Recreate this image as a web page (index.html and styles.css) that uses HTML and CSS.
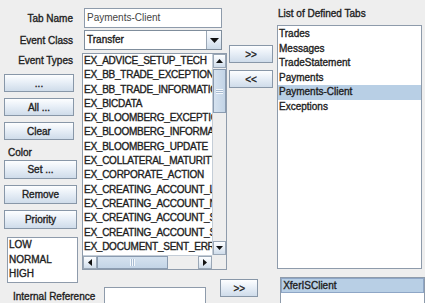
FILE: index.html
```html
<!DOCTYPE html>
<html>
<head>
<meta charset="utf-8">
<link rel="stylesheet" href="styles.css">
</head>
<body>
<div class="app">
  <div class="top">
    <div class="left">
      <div class="form-row">
        <span class="lbl">Tab Name</span>
        <div class="field tab-field">Payments-Client</div>
      </div>
      <div class="form-row">
        <span class="lbl">Event Class</span>
        <div class="combo">
          <span class="combo-text">Transfer</span>
          <span class="combo-btn"><svg width="9" height="5" viewBox="0 0 9 5"><path d="M0 0H9L4.5 5Z" fill="#111"/></svg></span>
        </div>
      </div>
      <div class="events">
        <div class="side">
          <div class="lbl side-lbl">Event Types</div>
          <div class="btn-group g1">
            <div class="btn">...</div>
            <div class="btn">All ...</div>
            <div class="btn">Clear</div>
          </div>
          <div class="color-lbl">Color</div>
          <div class="btn-group g2">
            <div class="btn">Set ...</div>
            <div class="btn">Remove</div>
            <div class="btn">Priority</div>
          </div>
          <div class="prio-list">
            <div class="item">LOW</div>
            <div class="item">NORMAL</div>
            <div class="item">HIGH</div>
          </div>
        </div>
        <div class="scroll-list">
          <div class="sl-content">
            <div class="item">EX_ADVICE_SETUP_TECH</div>
            <div class="item">EX_BB_TRADE_EXCEPTION</div>
            <div class="item">EX_BB_TRADE_INFORMATION</div>
            <div class="item">EX_BICDATA</div>
            <div class="item">EX_BLOOMBERG_EXCEPTION</div>
            <div class="item">EX_BLOOMBERG_INFORMATION</div>
            <div class="item">EX_BLOOMBERG_UPDATE</div>
            <div class="item">EX_COLLATERAL_MATURITY</div>
            <div class="item">EX_CORPORATE_ACTION</div>
            <div class="item">EX_CREATING_ACCOUNT_LIMIT</div>
            <div class="item">EX_CREATING_ACCOUNT_NOTIFICATION</div>
            <div class="item">EX_CREATING_ACCOUNT_SETTLEMENT</div>
            <div class="item">EX_CREATING_ACCOUNT_STATEMENT</div>
            <div class="item">EX_DOCUMENT_SENT_ERROR</div>
          </div>
          <div class="vscroll">
            <div class="arrow-btn"><svg width="7" height="4" viewBox="0 0 7 4"><path d="M0 4H7L3.5 0Z" fill="#111"/></svg></div>
            <div class="vtrack">
              <div class="vthumb"><span class="grip-h"></span></div>
            </div>
            <div class="arrow-btn"><svg width="7" height="4" viewBox="0 0 7 4"><path d="M0 0H7L3.5 4Z" fill="#111"/></svg></div>
          </div>
          <div class="hscroll">
            <div class="arrow-btn"><svg width="4" height="7" viewBox="0 0 4 7"><path d="M4 0V7L0 3.5Z" fill="#111"/></svg></div>
            <div class="htrack">
              <div class="hthumb"><span class="grip-v"></span></div>
            </div>
            <div class="arrow-btn"><svg width="4" height="7" viewBox="0 0 4 7"><path d="M0 0V7L4 3.5Z" fill="#111"/></svg></div>
          </div>
          <div class="corner"></div>
        </div>
      </div>
    </div>
    <div class="mid">
      <div class="btn mid-btn">&gt;&gt;</div>
      <div class="btn mid-btn">&lt;&lt;</div>
    </div>
    <div class="right">
      <div class="lbl right-lbl">List of Defined Tabs</div>
      <div class="tabs-list">
        <div class="item">Trades</div>
        <div class="item">Messages</div>
        <div class="item">TradeStatement</div>
        <div class="item">Payments</div>
        <div class="item selected">Payments-Client</div>
        <div class="item">Exceptions</div>
      </div>
    </div>
  </div>
  <div class="bottom">
    <span class="lbl ref-lbl">Internal Reference</span>
    <div class="field ref-field"></div>
    <div class="btn ref-btn">&gt;&gt;</div>
    <div class="client-list">
      <div class="item selected focused">XferISClient</div>
    </div>
  </div>
</div>
</body>
</html>
```

FILE: styles.css
```css
* { box-sizing: border-box; }
html, body { margin: 0; padding: 0; }
body {
  width: 425px;
  height: 303px;
  overflow: hidden;
  background: #eeeeee;
  font-family: "Liberation Sans", Arial, sans-serif;
  font-size: 10px;
  color: #1e1e1e;
}
.app { width: 425px; height: 303px; overflow: hidden; }
.top { display: flex; height: 277px; }
.left { width: 228px; padding-top: 8px; display: flex; flex-direction: column; }
.lbl, .btn, .item, .combo-text, .color-lbl {
  -webkit-text-stroke: 0.35px currentColor;
  white-space: nowrap;
}
.form-row { display: flex; align-items: center; height: 20px; }
.form-row + .form-row { margin-top: 2px; }
.form-row .lbl { width: 73px; text-align: right; margin-right: 11px; }
.field {
  background: #fff;
  border: 1px solid #8e9bab;
  height: 20px;
}
.tab-field { width: 138px; padding: 3px 2px; color: #444; line-height: 12px; }
.combo {
  width: 138px; height: 20px; display: flex;
  background: #fff; border: 1px solid #7f8d9c;
}
.combo-text { flex: 1; padding-left: 2px; line-height: 18px; }
.combo-btn {
  width: 15px; display: flex; align-items: center; justify-content: center;
  border-left: 1px solid #9aa7b6;
  background: linear-gradient(#fbfcfe, #e4ecf5 55%, #cddbe9);
}
.events { display: flex; margin-top: 3px; }
.side { width: 82px; display: flex; flex-direction: column; }
.side-lbl { width: 73px; text-align: right; height: 21px; line-height: 16px; }
.btn-group { display: flex; flex-direction: column; gap: 6px; margin-left: 4px; }
.btn {
  display: flex; align-items: center; justify-content: center;
  border: 1px solid #8897a8;
  background: linear-gradient(#fdfeff, #e8eff7 45%, #cfdcea);
  color: #222;
}
.g1 .btn { width: 70px; height: 18px; }
.g2 .btn { width: 73px; height: 19px; }
.color-lbl { height: 20px; padding: 5px 0 0 8px; line-height: 15px; }
.prio-list {
  margin: 8px 0 0 7px; width: 71px; height: 46px;
  background: #fff; border: 1px solid #8e9bab;
}
.prio-list .item { line-height: 14.5px; padding-left: 1px; }
.scroll-list {
  width: 145px; height: 217px;
  border: 1px solid #8e9bab;
  background: #fff;
  display: grid;
  grid-template-columns: 129px 14px;
  grid-template-rows: 201px 14px;
}
.sl-content { overflow: hidden; }
.sl-content .item { line-height: 14.3px; height: 14.3px; padding-left: 1px; letter-spacing: -0.25px; }
.vscroll {
  display: flex; flex-direction: column;
  background: #eeeeee;
  border-left: 1px solid #c4cdd7;
}
.hscroll {
  display: flex;
  background: #eeeeee;
  border-top: 1px solid #c4cdd7;
}
.corner { background: #eeeeee; }
.arrow-btn {
  width: 13px; height: 13px; flex: none;
  display: flex; align-items: center; justify-content: center;
  border: 1px solid #9aa7b6;
  background: linear-gradient(#fdfeff, #e3ebf4 60%, #cfdcea);
}
.vscroll .arrow-btn { width: 13px; height: 14px; }
.hscroll .arrow-btn { width: 14px; height: 13px; }
.vtrack { flex: 1; padding-top: 1px; }
.vthumb {
  height: 44px;
  border: 1px solid #8a9bb0;
  background: linear-gradient(90deg, #d5e2ef, #c3d4e6);
  display: flex; align-items: center; justify-content: center;
}
.grip-h {
  width: 7px; height: 5px;
  background: repeating-linear-gradient(#f4f8fc 0 1px, #a9bcd2 1px 2px);
}
.htrack { flex: 1; }
.hthumb {
  width: 71px; height: 13px;
  border: 1px solid #8a9bb0;
  background: linear-gradient(#d5e2ef, #c3d4e6);
  display: flex; align-items: center; justify-content: center;
}
.grip-v {
  width: 5px; height: 7px;
  background: repeating-linear-gradient(90deg, #f4f8fc 0 1px, #a9bcd2 1px 2px);
}
.mid { width: 49px; padding: 45px 0 0 1px; display: flex; flex-direction: column; gap: 7px; }
.mid-btn { width: 44px; height: 18px; }
.right { width: 148px; }
.right-lbl { display: block; padding: 7px 0 0 1px; line-height: 14px; }
.tabs-list {
  margin-top: 4px; width: 145px; height: 244px;
  background: #fff; border: 1px solid #8e9bab;
  padding-top: 1px;
}
.tabs-list .item { line-height: 14.5px; height: 14.5px; padding-left: 1px; }
.selected { background: #b8cfe5; }
.bottom { display: flex; align-items: flex-start; height: 26px; }
.ref-lbl { margin: 14px 0 0 13px; width: 92px; line-height: 12px; }
.ref-field { margin-top: 10px; width: 103px; height: 20px; }
.ref-btn { margin: 2px 0 0 14px; width: 38px; height: 18px; }
.client-list {
  margin-left: 22px; width: 146px; height: 30px;
  background: #fff; border: 1px solid #8e9bab;
}
.client-list .item { height: 15px; line-height: 13px; padding-left: 1px; }
.focused { border: 1px solid #8ea6c6; }
```
